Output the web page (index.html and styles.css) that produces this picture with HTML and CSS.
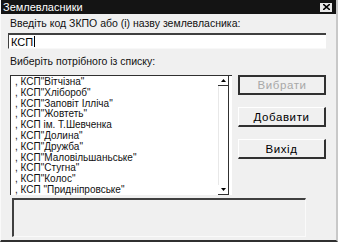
FILE: index.html
```html
<!DOCTYPE html>
<html lang="uk">
<head>
    <meta charset="UTF-8">
    <title>Землевласники</title>
    <link rel="stylesheet" href="styles.css">
</head>
<body>
    <!-- Dialog window -->
    <div class="window">
        <div class="titlebar">
            <span class="title">Землевласники</span>
            <span class="close">
                <svg width="7" height="6" viewBox="0 0 7 6"><path d="M0 0 L7 6 M7 0 L0 6" stroke="#000" stroke-width="1.6"/></svg>
            </span>
        </div>

        <div class="content">
            <div class="label">Введіть код ЗКПО або (і) назву землевласника:</div>
            <div class="input"><span>КСП</span><span class="caret"></span></div>

            <div class="label label-list">Виберіть потрібного із списку:</div>

            <div class="main">
                <!-- List of owners -->
                <div class="listbox">
                    <ul class="items">
                        <li>, КСП"Вітчізна"</li>
                        <li>, КСП"Хлібороб"</li>
                        <li>, КСП"Заповіт Ілліча"</li>
                        <li>, КСП"Жовтеть"</li>
                        <li>, КСП ім. Т.Шевченка</li>
                        <li>, КСП"Долина"</li>
                        <li>, КСП"Дружба"</li>
                        <li>, КСП"Маловільшаньське"</li>
                        <li>, КСП"Стугна"</li>
                        <li>, КСП"Колос"</li>
                        <li>, КСП "Придніпровське"</li>
                    </ul>
                    <div class="scrollbar">
                        <div class="arrow"><svg width="5" height="3" viewBox="0 0 5 3"><path d="M0 3 L2.5 0 L5 3 Z" fill="#000"/></svg></div>
                        <div class="track"></div>
                        <div class="arrow"><svg width="5" height="3" viewBox="0 0 5 3"><path d="M0 0 L2.5 3 L5 0 Z" fill="#000"/></svg></div>
                    </div>
                </div>

                <!-- Action buttons -->
                <div class="buttons">
                    <button class="btn btn-default" disabled>Вибрати</button>
                    <button class="btn">Добавити</button>
                    <button class="btn">Вихід</button>
                </div>
            </div>

            <div class="status"></div>
        </div>
    </div>
</body>
</html>
```

FILE: styles.css
```css
/* Reset */
* {
    box-sizing: border-box;
    margin: 0;
    padding: 0;
}

body {
    width: 338px;
    height: 242px;
    overflow: hidden;
    background-color: #f0f0f0;
    font-family: 'Liberation Sans', Arial, sans-serif;
    font-size: 10.5px;
    color: #000;
}

/* Window frame */
.window {
    width: 338px;
    height: 242px;
    background-color: #f0f0f0;
    border-left: 1px solid #fafafa;
    border-right: 2px solid #c8c8c8;
    border-bottom: 2px solid #303030;
    display: flex;
    flex-direction: column;
}

/* Title bar */
.titlebar {
    height: 14px;
    background-color: #141414;
    color: #fff;
    display: flex;
    align-items: center;
    justify-content: space-between;
    padding: 0 4px 0 2px;
}

.title {
    font-size: 11px;
    line-height: 14px;
}

.close {
    width: 12px;
    height: 9px;
    background-color: #e8e8e8;
    display: flex;
    align-items: center;
    justify-content: center;
}

/* Dialog content */
.content {
    padding: 3px 10px 0 7px;
    display: flex;
    flex-direction: column;
}

.label {
    line-height: 13px;
    padding-left: 2px;
    color: #111;
}

.label-list {
    margin-top: 6px;
}

.input {
    margin-top: 3px;
    height: 16px;
    background-color: #fff;
    border-top: 2px solid #404040;
    border-left: 1px solid #404040;
    border-bottom: 1px solid #f8f8f8;
    display: flex;
    align-items: center;
    padding-left: 2px;
    font-size: 11px;
    line-height: 12px;
}

.caret {
    width: 1px;
    height: 11px;
    background-color: #000;
    margin-left: 1px;
}

/* List and buttons row */
.main {
    margin-top: 7px;
    display: flex;
    gap: 6px;
    padding-left: 2px;
}

.listbox {
    width: 222px;
    height: 120px;
    background-color: #fff;
    border-top: 1px solid #303030;
    border-left: 1px solid #303030;
    display: flex;
}

.items {
    flex: 1;
    list-style: none;
    padding: 1px 0 0 4px;
    font-family: 'Liberation Sans Narrow', 'Liberation Sans', Arial, sans-serif;
    font-size: 10px;
    line-height: 10.8px;
    color: #111;
}

.scrollbar {
    width: 14px;
    display: flex;
    flex-direction: column;
    padding-right: 3px;
}

.arrow {
    height: 10px;
    display: flex;
    align-items: center;
    justify-content: center;
    border-right: 1px solid #303030;
    border-bottom: 1px solid #303030;
}

.track {
    flex: 1;
    border-left: 1px solid #e8e8e8;
    border-right: 1px solid #303030;
}

.buttons {
    display: flex;
    flex-direction: column;
    gap: 12px;
}

.btn {
    width: 88px;
    height: 20px;
    font-family: 'Liberation Sans', Arial, sans-serif;
    font-size: 11.5px;
    letter-spacing: 0.6px;
    color: #000;
    background-color: #f0f0f0;
    border-top: 1px solid #fff;
    border-left: 1px solid #fff;
    border-right: 2px solid #303030;
    border-bottom: 2px solid #303030;
}

.btn-default {
    color: #a8a8a8;
    border-top: 2px solid #303030;
    border-left: 2px solid #303030;
}

/* Status panel at the bottom */
.status {
    margin: 3px 0 0 4px;
    width: 294px;
    height: 39px;
    border-top: 2px solid #404040;
    border-left: 2px solid #404040;
    border-right: 1px solid #fafafa;
    border-bottom: 1px solid #fafafa;
}
```
